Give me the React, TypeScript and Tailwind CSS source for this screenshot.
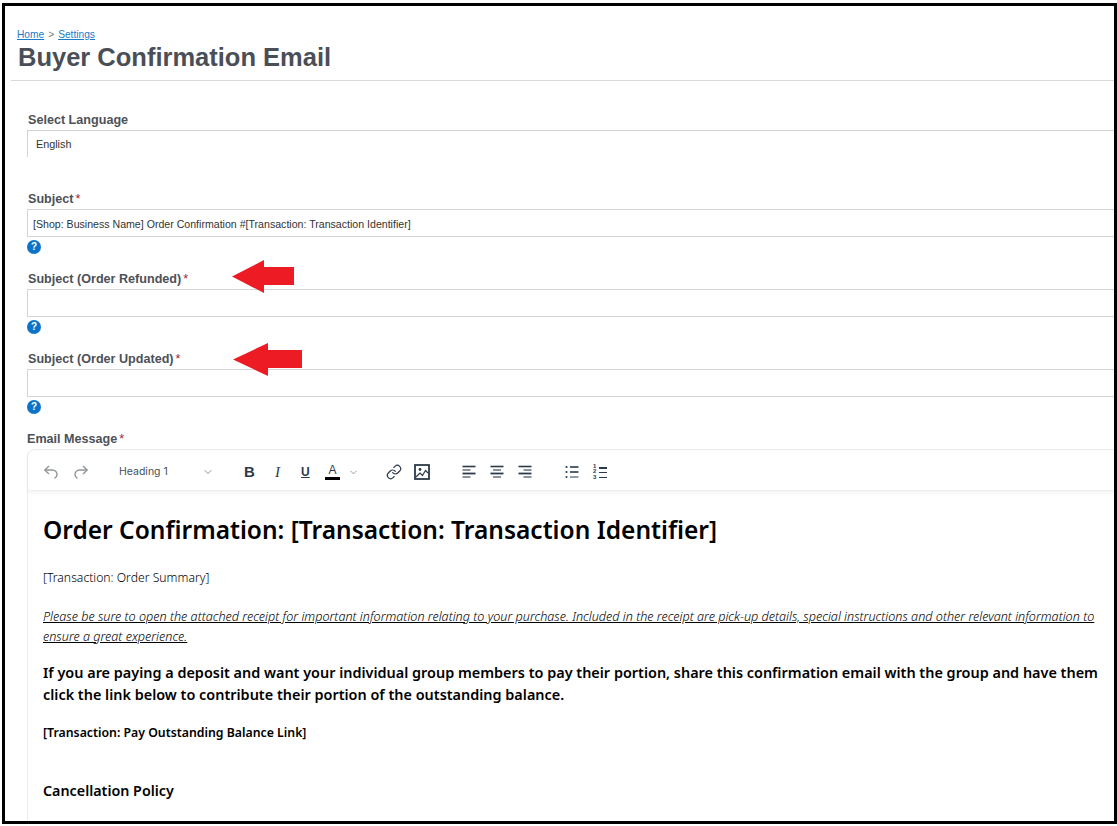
import { ChevronDown, Link } from 'lucide-react'

function Req() {
  return <span className="ml-0.5 font-normal text-[#a3263a]">*</span>
}

function Help() {
  return (
    <div className="mt-[3px] flex h-[14px] w-[14px] items-center justify-center rounded-full bg-[#0a74c9] text-[10px] leading-none font-bold text-white">
      ?
    </div>
  )
}

function Field({ label, value, arrow }: { label: string; value?: string; arrow?: React.ReactNode }) {
  return (
    <div className="relative">
      <div className="h-[15px] pl-[1px] text-[12.6px] leading-[17px] font-bold text-[#4d5158]">
        {label}
        <Req />
      </div>
      <div className="mt-[3px] flex h-[28px] items-center border border-r-0 border-[#d4d4d4] pt-[3px] pl-[5px] text-[10.6px] text-[#333]">
        {value}
      </div>
      <Help />
      {arrow}
    </div>
  )
}

function RedArrow({ cls, head, end }: { cls: string; head: number; end: number }) {
  return (
    <svg className={`absolute ${cls}`} width={end} height="33" viewBox={`0 0 ${end} 33`}>
      <path d={`M0 16.5 L${head} 0 V7 H${end} V25 H${head} V33 Z`} fill="#ed1c24" />
    </svg>
  )
}

const INK = '#2b3a4a'

function Undo({ flip }: { flip?: boolean }) {
  return (
    <svg width="16" height="16" viewBox="0 0 16 16" fill="none" stroke="#8f959b" strokeWidth="1.4" className={flip ? '-scale-x-100' : ''}>
      <path d="M6 2 L1.8 6 L6 10" />
      <path d="M2 6 H9 C12.5 6 14 8.5 14 10.5 C14 12.5 13 13.6 11.5 14.4" />
    </svg>
  )
}

function ImageIcon() {
  return (
    <svg width="16" height="16" viewBox="0 0 16 16" fill="none" stroke={INK}>
      <rect x="1" y="1" width="14" height="14" strokeWidth="1.8" />
      <circle cx="6" cy="5.5" r="1.4" fill={INK} stroke="none" />
      <path d="M2 13 L6 9 L8.5 11.5 L11.5 6.5 L14 9" strokeWidth="1.2" />
    </svg>
  )
}

function Align({ side }: { side: 'left' | 'center' | 'right' }) {
  const rows = [
    { y: 2.5, long: true, w: 1.6 },
    { y: 6, long: false, w: 1.1 },
    { y: 9.5, long: true, w: 1.8 },
    { y: 13, long: false, w: 1.1 },
  ]
  return (
    <svg width="14" height="16" viewBox="0 0 14 16" stroke={INK}>
      {rows.map((r) => {
        const len = r.long ? 13 : 8
        const x = side === 'left' ? 0.5 : side === 'right' ? 13.5 - len : 7 - len / 2
        return <line key={r.y} x1={x} x2={x + len} y1={r.y} y2={r.y} strokeWidth={r.w} />
      })}
    </svg>
  )
}

function BulletList() {
  return (
    <svg width="14" height="16" viewBox="0 0 14 16" stroke={INK} fill={INK}>
      <circle cx="1.5" cy="3" r="1.1" stroke="none" />
      <circle cx="1.5" cy="8" r="1.1" stroke="none" />
      <circle cx="1.5" cy="13" r="1" stroke="none" />
      <line x1="5" x2="13.5" y1="3" y2="3" strokeWidth="1.6" />
      <line x1="5" x2="13.5" y1="8" y2="8" strokeWidth="1.6" />
      <line x1="5" x2="13.5" y1="13" y2="13" strokeWidth="1" />
    </svg>
  )
}

function NumberList() {
  return (
    <div className="flex h-[16px] w-[14px] items-center">
      <div className="flex w-[5px] flex-col text-[6px] leading-[5.5px] font-bold text-[#2b3a4a]">
        <span>1</span>
        <span>2</span>
        <span>3</span>
      </div>
      <div className="ml-[1px] flex flex-col gap-[3.5px]">
        <div className="h-[2px] w-[8px] bg-[#2b3a4a]" />
        <div className="h-[1px] w-[8px] bg-[#2b3a4a]" />
        <div className="h-[1px] w-[8px] bg-[#2b3a4a]" />
      </div>
    </div>
  )
}

function Toolbar() {
  return (
    <div className="flex h-[41px] items-center border-b border-[#f0f0f0] pt-[4px] shadow-[0_2px_4px_rgba(0,0,0,0.05)]">
      <span className="ml-[15px]">
        <Undo />
      </span>
      <span className="ml-[14px]">
        <Undo flip />
      </span>
      <span className="ml-[30px] w-[83px] font-['Inter',sans-serif] text-[10.5px] text-[#44505c]">Heading 1</span>
      <ChevronDown size={12} className="text-[#8e949a]" />
      <span className="ml-[30px] w-[12px] text-[15px] font-bold text-[#2b3a4a]">B</span>
      <span className="ml-[19px] w-[10px] font-['Liberation_Serif',serif] text-[15px] text-[#2b3a4a] italic">I</span>
      <span className="ml-[16px] w-[12px] text-[12px] font-bold text-[#2b3a4a] underline">U</span>
      <span className="ml-[12px] flex h-[16px] w-[15px] flex-col items-center border-b-[3px] border-black text-[12px] leading-[13px] text-[#2b3a4a]">A</span>
      <ChevronDown size={11} className="ml-[8px] text-[#8e949a]" />
      <Link size={16} strokeWidth={1.8} className="ml-[27px] text-[#2b3a4a]" />
      <span className="ml-[12px]">
        <ImageIcon />
      </span>
      <span className="ml-[32px]">
        <Align side="left" />
      </span>
      <span className="ml-[14px]">
        <Align side="center" />
      </span>
      <span className="ml-[14px]">
        <Align side="right" />
      </span>
      <span className="ml-[33px]">
        <BulletList />
      </span>
      <span className="ml-[14px]">
        <NumberList />
      </span>
    </div>
  )
}

export default function App() {
  return (
    <div className="h-[826px] w-[1117px] overflow-hidden bg-white pt-[3px] pl-[2px] font-['Liberation_Sans',sans-serif]">
      <div className="h-[821px] overflow-hidden border-[3px] border-black">
        <div className="ml-[6px] h-[75px] border-b border-[#d9d9d9] pt-[23px] pl-[6px]">
          <div className="text-[10.2px] leading-[12px] text-[#1a7bc9]">
            <span className="underline">Home</span>
            <span className="mx-[4px] text-[#777]">&gt;</span>
            <span className="underline">Settings</span>
          </div>
          <h1 className="ml-[1px] text-[25.5px] leading-[32px] font-bold text-[#4a4f57]">Buyer Confirmation Email</h1>
        </div>

        <div className="ml-[22px] pt-[31px]">
          <div className="h-[15px] pl-[1px] text-[12.6px] leading-[17px] font-bold text-[#4d5158]">Select Language</div>
          <div className="mt-[3px] flex h-[27px] items-center border-t border-l border-[#d4d4d4] pl-[8px] text-[10.8px] text-[#333]">
            English
          </div>

          <div className="mt-[34px]">
            <Field label="Subject" value="[Shop: Business Name] Order Confirmation #[Transaction: Transaction Identifier]" />
          </div>
          <div className="mt-[17px]">
            <Field label="Subject (Order Refunded)" arrow={<RedArrow cls="-top-[11px] left-[205px]" head={32} end={62} />} />
          </div>
          <div className="mt-[17px]">
            <Field label="Subject (Order Updated)" arrow={<RedArrow cls="-top-[8px] left-[206px]" head={35} end={69} />} />
          </div>

          <div className="mt-[17px] h-[15px] text-[12.6px] leading-[17px] font-bold text-[#4d5158]">
            Email Message
            <Req />
          </div>
          <div className="mt-[3px] h-[400px] rounded-tl-[8px] border-t border-l border-[#ececec]">
            <Toolbar />
            <div className="pr-[14px] pl-[15px] font-['Noto_Sans',sans-serif] text-black">
              <h2 className="mt-[21px] text-[24.5px] leading-[36px] font-semibold">
                Order Confirmation: [Transaction: Transaction Identifier]
              </h2>
              <p className="mt-[22px] text-[12.2px] leading-[16px] font-light">[Transaction: Order Summary]</p>
              <p className="mt-[21px] text-[12.6px] leading-[19.5px] font-light italic underline">
                Please be sure to open the attached receipt for important information relating to your purchase. Included in the receipt are pick-up details, special instructions and other relevant information to ensure a great experience.
              </p>
              <p className="mt-[16px] text-[14.43px] leading-[22px] font-semibold">
                If you are paying a deposit and want your individual group members to pay their portion, share this confirmation email with the group and have them click the link below to contribute their portion of the outstanding balance.
              </p>
              <p className="mt-[19px] text-[12.3px] leading-[16px] font-semibold">[Transaction: Pay Outstanding Balance Link]</p>
              <p className="mt-[40px] text-[14.3px] leading-[20px] font-semibold">Cancellation Policy</p>
            </div>
          </div>
        </div>
      </div>
    </div>
  )
}
